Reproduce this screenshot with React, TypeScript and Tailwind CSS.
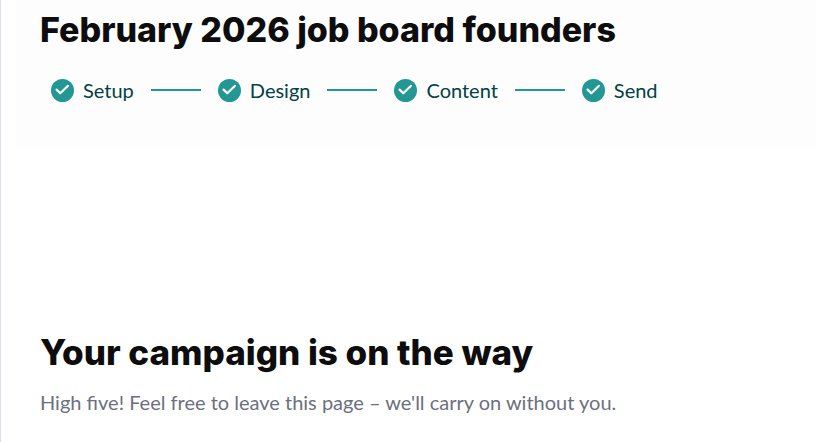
const steps = ["Setup", "Design", "Content", "Send"];

const CheckIcon = () => (
  <svg viewBox="0 0 23 23" className="h-[23px] w-[23px] shrink-0" aria-hidden="true">
    <circle cx="11.5" cy="11.5" r="11.5" fill="#229794" />
    <path
      d="M5.6 10.6l3.7 3.7L17 6.8"
      fill="none"
      stroke="#fff"
      strokeWidth="2.2"
      strokeLinecap="round"
      strokeLinejoin="round"
    />
  </svg>
);

const App = () => {
  return (
    <div className="min-h-screen border-l border-[#e0deee] bg-white pl-[15px] font-['Lato',sans-serif]">
      <header className="bg-[#fdfdfd] pt-2 pb-11 pl-6">
        <h1 className="font-['Inter',sans-serif] text-[34px] leading-11 font-extrabold text-[#0d0d0d]">
          February 2026 job board founders
        </h1>
        <ol className="mt-6 flex items-center pl-[11px]">
          {steps.map((step, index) => (
            <li key={step} className="flex items-center text-xl text-[#004145]">
              {index > 0 && <span className="mx-[17px] h-[2px] w-[50px] bg-[#229794]" />}
              <CheckIcon />
              <span className="ml-[9px]">{step}</span>
            </li>
          ))}
        </ol>
      </header>
      <main className="pt-[182px] pl-6">
        <h2 className="font-['Inter',sans-serif] text-[35px] leading-11 font-extrabold text-[#0d0d0d]">
          Your campaign is on the way
        </h2>
        <p className="mt-[14px] text-xl text-[#6b7080]">
          High five! Feel free to leave this page – we'll carry on without you.
        </p>
      </main>
    </div>
  );
};

export default App;
